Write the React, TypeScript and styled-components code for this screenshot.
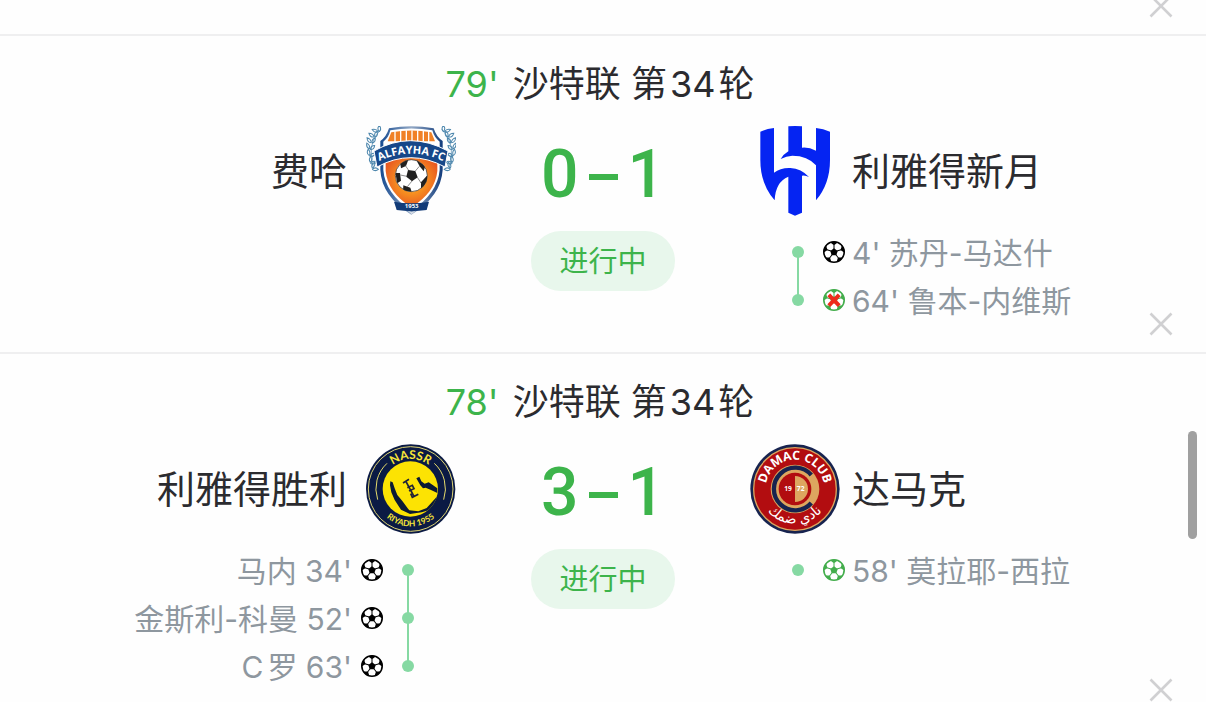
import React from 'react';
import styled, { createGlobalStyle } from 'styled-components';

const GlobalStyle = createGlobalStyle`
  * { box-sizing: border-box; }
  body {
    margin: 0;
    background: #fefefe;
    color: #2b2b2f;
    font-family: Inter, 'Noto Sans CJK SC', sans-serif;
  }
`;

const Page = styled.main`
  position: relative;
  height: 100vh;
  overflow: hidden;
`;

const Card = styled.section`
  position: relative;
  padding: 24px 0 28px;
  border-bottom: 2px solid #efeff0;
`;

const PreviousCard = styled(Card)`
  height: 36px;
  padding: 0;
`;

const CloseButton = styled.button`
  position: absolute;
  right: 33px;
  bottom: 16px;
  width: 24px;
  height: 24px;
  padding: 0;
  border: 0;
  background: none;
  cursor: pointer;

  svg { display: block; }
`;

const Title = styled.h2`
  display: flex;
  justify-content: center;
  gap: 14px;
  margin: 0 6px 18px 0;
  font-size: 36px;
  line-height: 48px;
  font-weight: 400;
`;

const Minute = styled.span`
  color: #3db44b;
`;

const RoundNumber = styled.span`
  margin: 0 3px;
`;

const Board = styled.div`
  display: grid;
  grid-template-columns: 1fr 294px 1fr;
`;

const Side = styled.div<{ $home?: boolean }>`
  display: flex;
  flex-direction: column;
  align-items: ${(p) => (p.$home ? 'flex-end' : 'flex-start')};
  gap: 12px;
`;

const Team = styled.div<{ $home?: boolean }>`
  display: flex;
  flex-direction: ${(p) => (p.$home ? 'row-reverse' : 'row')};
  align-items: center;
  gap: ${(p) => (p.$home ? 19 : 12)}px;
  font-size: 38px;
  line-height: 56px;
  white-space: nowrap;

  svg { width: 90px; height: 90px; flex: none; }
`;

const Events = styled.ul`
  margin: 0;
  padding: 0 42px;
  list-style: none;
`;

const Event = styled.li<{ $home?: boolean }>`
  display: flex;
  flex-direction: ${(p) => (p.$home ? 'row-reverse' : 'row')};
  align-items: center;
  height: 48px;
  color: #8e979f;
  font-size: 30px;
  white-space: nowrap;
`;

const EventText = styled.span`
  padding-top: 2px;
  line-height: 46px;
`;

const Initial = styled.span`
  margin-right: 4px;
`;

const Dot = styled.span`
  position: relative;
  width: 12px;
  height: 12px;
  border-radius: 50%;
  background: #86d9a3;

  li:not(:last-child) > &::after {
    content: '';
    position: absolute;
    left: 5px;
    top: 6px;
    width: 2px;
    height: 48px;
    background: #86d9a3;
  }
`;

const BallBox = styled.span`
  width: 24px;
  height: 24px;
  margin: 0 6px 0 18px;

  li[data-side='home'] & { margin: 0 18px 0 8px; }
  svg { display: block; }
`;

const Center = styled.div`
  display: flex;
  flex-direction: column;
  align-items: center;
  gap: 15px;
`;

const Score = styled.div`
  display: flex;
  align-items: center;
  justify-content: center;
  gap: 10px;
  height: 90px;
  padding-top: 8px;
  color: #3db44b;
  font-family: Roboto, 'Liberation Sans', sans-serif;
  font-size: 66px;
  font-weight: 500;
  line-height: 82px;
`;

const Dash = styled.span`
  width: 29px;
  height: 6px;
  margin-top: 4px;
  background: #3db44b;
`;

const Status = styled.span`
  padding: 2px 28px 0;
  border-radius: 30px;
  background: #e8f7ec;
  color: #3db44b;
  font-size: 29px;
  line-height: 58px;
`;

const Thumb = styled.div`
  position: absolute;
  top: 431px;
  right: 9px;
  width: 9px;
  height: 108px;
  border-radius: 5px;
  background: #a0a0a0;
`;

type BallKind = 'goal' | 'penalty' | 'missed';

function Ball({ kind }: { kind: BallKind }) {
  const color = kind === 'goal' ? '#000' : '#43ad4c';
  const label = { goal: '进球', penalty: '点球', missed: '射失点球' }[kind];
  return (
    <svg width="24" height="24" viewBox="0 0 24 24" role="img" aria-label={label}>
      <circle cx="12" cy="12" r="10.2" fill="#fff" stroke={color} strokeWidth="1.6" />
      {[0, 72, 144, 216, 288].map((a) => (
        <g key={a} transform={`rotate(${a} 12 12)`} fill={color}>
          <path d="M8 2.2Q12 .6 16 2.2L12 5.2Z" />
          <path d="M11.5 4.5h1V9h-1z" />
        </g>
      ))}
      <path d="M12 8.2l3.7 2.7-1.4 4.3H9.7l-1.4-4.3z" fill={color} />
      {kind === 'missed' && (
        <path d="M6.8 6.8l10.4 10.8M17.2 6.8L6.8 17.6" stroke="#ee2b1c" strokeWidth="4" fill="none" />
      )}
    </svg>
  );
}

function Close() {
  return (
    <CloseButton type="button" aria-label="关闭">
      <svg width="24" height="24" viewBox="0 0 24 24" fill="none" stroke="#d0d0d2" strokeWidth="2.6">
        <path d="M1.5 1.5l21 21M22.5 1.5l-21 21" />
      </svg>
    </CloseButton>
  );
}

function AlFayhaCrest() {
  const leaves = [
    [52, 160, 50], [46, 142, 40], [43, 122, 20], [44, 102, 5], [49, 83, -10], [58, 66, -25], [70, 50, -40],
  ];
  const laurel = (
    <g fill="none" stroke="#4d87ad" strokeWidth="3">
      <path d="M78 42Q32 88 56 162" strokeWidth="2" />
      {leaves.map(([x, y, a]) => (
        <g key={y} transform={`translate(${x} ${y}) rotate(${a})`}>
          <path d="M0 0Q-12-3-10-17Q1-12 0 0" />
          <path d="M2 2Q2-11 14-12Q14 0 2 2" />
        </g>
      ))}
    </g>
  );
  return (
    <svg viewBox="33 33 270 270" role="img" aria-label="费哈队徽">
      <defs>
        <linearGradient id="fayhaEdge" x1="0" x2="1">
          <stop offset="0" stopColor="#174b91" />
          <stop offset=".5" stopColor="#92a8c5" />
          <stop offset="1" stopColor="#123c7c" />
        </linearGradient>
        <radialGradient id="fayhaGlow" cx=".5" cy=".45" r=".6">
          <stop offset="0" stopColor="#ffc629" />
          <stop offset=".5" stopColor="#f58a20" />
          <stop offset="1" stopColor="#e65122" />
        </radialGradient>
        <path id="fayhaName" d="M62 144Q167 88 276 144" />
        <clipPath id="fayhaBall"><circle cx="169" cy="182" r="48" /></clipPath>
      </defs>
      {laurel}
      <g transform="translate(338 0) scale(-1 1)">{laurel}</g>
      <path d="M102 40Q169 28 236 40Q244 66 263 78V165Q258 244 169 299Q80 244 76 165V78Q94 66 102 40Z" fill="url(#fayhaEdge)" />
      <path d="M106 46Q169 35 232 46Q238 68 254 80V165Q248 234 169 288Q90 234 85 165V80Q101 68 106 46Z" fill="#fff" />
      <path d="M109 52Q169 41 229 52L240 79H98Z" fill="#f08127" />
      <g stroke="#fff" strokeWidth="4">
        <path d="M120 49v32M137 47v32M154 46v32M171 46v32M188 46v32M205 47v32M221 49v32" />
      </g>
      <path d="M92 128H247V168Q241 232 169 277Q98 232 92 168Z" fill="url(#fayhaGlow)" />
      <circle cx="169" cy="182" r="48" fill="#fff" stroke="#242424" strokeWidth="2" />
      <g clipPath="url(#fayhaBall)" fill="#20201f">
        <path d="M159 165L181 168L188 187L171 199L154 185Z" />
        <path d="M135 142L160 134L153 153L138 160Z" />
        <path d="M184 136L211 152L206 169L194 154Z" />
        <path d="M121 174L135 174L138 197L127 205Z" />
        <path d="M145 211L166 218L170 230L144 229Z" />
        <path d="M198 202L217 181L219 208L198 224Z" />
        <path d="M150 150L161 166M193 154L181 168M136 180L156 184M157 215L171 198M199 205L187 187" stroke="#555" strokeWidth="2" />
      </g>
      <path d="M57 108Q165 46 279 108L270 156Q167 100 66 156Z" fill="#164789" stroke="#fff" strokeWidth="3" />
      <text fill="#fff" fontFamily="Open Sans, sans-serif" fontWeight="700" fontSize="33">
        <textPath href="#fayhaName" startOffset="50%" textAnchor="middle">ALFAYHA FC</textPath>
      </text>
      <path d="M117 260Q169 270 222 260L215 285Q169 292 125 285Z" fill="#123b78" />
      <text x="170" y="280" textAnchor="middle" fill="#fff" fontFamily="Open Sans, sans-serif" fontWeight="700" fontSize="18">1953</text>
      <path d="M158 287l12 4 12-4-12 11z" fill="#d7dde5" />
    </svg>
  );
}

function AlHilalCrest() {
  return (
    <svg viewBox="30 33 270 270" role="img" aria-label="利雅得新月队徽">
      <g fill="#0524f2">
        <path d="M61 50Q80 41 102 39V173Q121 158 151 159Q184 161 207 186Q196 180 186 182V293L165 302L145 293V185Q106 201 104 256Q61 207 61 135Z" />
        <path d="M145 34Q165 32 186 34V98Q207 96 228 107V39Q250 41 270 50V135Q270 207 228 256V151Q203 122 157 122Q139 123 122 132Q130 118 145 109Z" />
      </g>
    </svg>
  );
}

function AlNassrCrest() {
  return (
    <svg viewBox="33 27 270 270" role="img" aria-label="利雅得胜利队徽">
      <defs>
        <path id="nassrTop" d="M77 162a90 90 0 0 1 180 0" />
        <path id="nassrBottom" d="M55 162a112 112 0 0 0 224 0" />
        <clipPath id="nassrDisc"><circle cx="166" cy="162" r="83" /></clipPath>
      </defs>
      <circle cx="167" cy="162" r="134" fill="#0b1a44" />
      <circle cx="167" cy="162" r="127" fill="none" stroke="#dfd575" strokeWidth="3" />
      <path d="M96 85A104 104 0 0 0 68 194M238 85A104 104 0 0 1 266 194" fill="none" stroke="#e4da6b" strokeWidth="3" />
      <circle cx="166" cy="162" r="83" fill="#fce303" />
      <g fill="#0b1a34" clipPath="url(#nassrDisc)">
        <path d="M106 139L113 142L119 160L127 180L142 198L158 220L163 226L190 229L215 219L244 187L252 187V200L226 224L200 232L165 237L138 224L119 195L109 172L105 151Z" />
        <path d="M184 130L193 125L199 139L209 146L221 142L232 149L247 160V174L228 165L212 158L204 160L196 151Z" />
      </g>
      <g fill="none" stroke="#202337" strokeWidth="5">
        <path d="M144 144L162 133M152 138L177 184M157 158L172 151L177 161L162 168M167 176L172 187L190 178" />
      </g>
      <g fill="#f8e638" fontFamily="Lato, sans-serif" fontWeight="700">
        <text fontSize="36">
          <textPath href="#nassrTop" startOffset="50%" textAnchor="middle">NASSR</textPath>
        </text>
        <text fontSize="25">
          <textPath href="#nassrBottom" startOffset="50%" textAnchor="middle">RIYADH 1955</textPath>
        </text>
      </g>
    </svg>
  );
}

function DamacCrest() {
  return (
    <svg viewBox="30 27 270 270" role="img" aria-label="达马克队徽">
      <defs>
        <path id="damacTop" d="M77 162a88 88 0 0 1 176 0" />
        <path id="damacBottom" d="M57 158a108 108 0 0 0 216 0" />
      </defs>
      <circle cx="165" cy="162" r="134" fill="#17234f" />
      <circle cx="165" cy="162" r="124" fill="#b20d10" stroke="#dda65f" strokeWidth="4" />
      <circle cx="165" cy="162" r="73" fill="#dda65f" />
      <path d="M214 120A64 64 0 1 0 214 204" fill="none" stroke="#17234f" strokeWidth="13" />
      <circle cx="165" cy="162" r="49" fill="#b20d10" />
      <path d="M165 123a39 39 0 0 1 0 78z" fill="#dda65f" />
      <g fill="#fff" fontFamily="Open Sans, sans-serif" fontWeight="700">
        <text x="144" y="169" fontSize="20" textAnchor="middle">19</text>
        <text x="182" y="169" fontSize="20" textAnchor="middle">72</text>
        <text fontSize="37">
          <textPath href="#damacTop" startOffset="50%" textAnchor="middle">DAMAC CLUB</textPath>
        </text>
      </g>
      <text fill="#fff" fontFamily="DejaVu Sans, sans-serif" fontSize="42">
        <textPath href="#damacBottom" startOffset="50%" textAnchor="middle">نادي ضمك</textPath>
      </text>
    </svg>
  );
}

interface MatchEvent { minute: number; player: React.ReactNode; kind: BallKind }
interface SideData { name: string; crest: React.ReactNode; score: number; events: MatchEvent[] }
interface MatchData { minute: number; home: SideData; away: SideData }

const matches: MatchData[] = [
  {
    minute: 79,
    home: { name: '费哈', crest: <AlFayhaCrest />, score: 0, events: [] },
    away: {
      name: '利雅得新月',
      crest: <AlHilalCrest />,
      score: 1,
      events: [
        { minute: 4, player: '苏丹-马达什', kind: 'goal' },
        { minute: 64, player: '鲁本-内维斯', kind: 'missed' },
      ],
    },
  },
  {
    minute: 78,
    home: {
      name: '利雅得胜利',
      crest: <AlNassrCrest />,
      score: 3,
      events: [
        { minute: 34, player: '马内', kind: 'goal' },
        { minute: 52, player: '金斯利-科曼', kind: 'goal' },
        { minute: 63, player: <><Initial>C</Initial>罗</>, kind: 'goal' },
      ],
    },
    away: {
      name: '达马克',
      crest: <DamacCrest />,
      score: 1,
      events: [{ minute: 58, player: '莫拉耶-西拉', kind: 'penalty' }],
    },
  },
];

function TeamSide({ side, home }: { side: SideData; home?: boolean }) {
  return (
    <Side $home={home}>
      <Team $home={home}>
        {side.crest}
        <span>{side.name}</span>
      </Team>
      {side.events.length > 0 && (
        <Events>
          {side.events.map((e) => (
            <Event key={e.minute} $home={home} data-side={home ? 'home' : 'away'}>
              <Dot />
              <BallBox><Ball kind={e.kind} /></BallBox>
              <EventText>
                {home ? <>{e.player} {e.minute}'</> : <>{e.minute}' {e.player}</>}
              </EventText>
            </Event>
          ))}
        </Events>
      )}
    </Side>
  );
}

function Match({ match }: { match: MatchData }) {
  return (
    <Card>
      <Title>
        <Minute>{match.minute}'</Minute>
        <span>沙特联 第<RoundNumber>34</RoundNumber>轮</span>
      </Title>
      <Board>
        <TeamSide side={match.home} home />
        <Center>
          <Score>
            <span>{match.home.score}</span>
            <Dash />
            <span>{match.away.score}</span>
          </Score>
          <Status>进行中</Status>
        </Center>
        <TeamSide side={match.away} />
      </Board>
      <Close />
    </Card>
  );
}

export default function App() {
  return (
    <>
      <GlobalStyle />
      <Page>
        <PreviousCard><Close /></PreviousCard>
        {matches.map((m) => <Match key={m.minute} match={m} />)}
        <Thumb />
      </Page>
    </>
  );
}
